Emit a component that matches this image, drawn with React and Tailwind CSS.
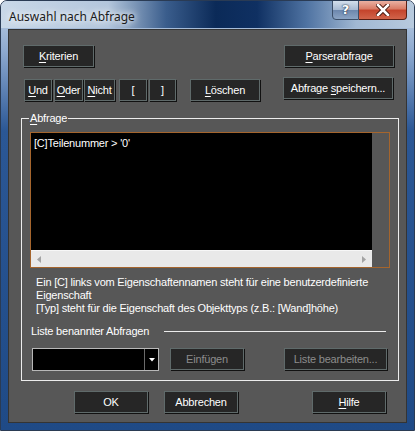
import React from 'react'

const Btn = ({ children, className = '', disabled = false }) => (
  <div
    className={`h-[22px] flex items-center justify-center bg-[#262626] border border-[#5f6a6a] shadow-[1px_1px_0_#111] ${disabled ? 'text-[#8c8c8c]' : 'text-white'} ${className}`}
  >
    <span className="whitespace-pre">{children}</span>
  </div>
)

const U = ({ children }) => <span className="underline underline-offset-2">{children}</span>

const App = () => {
  return (
    <div className="w-[415px] h-[431px] flex flex-col px-[7px] pb-[7px] rounded-t-[7px] border border-[#2a3b54] bg-[linear-gradient(to_bottom,#c2d2e4_0px,#8eaad0_50px,#2b5795_130px,#1f4a86_100%)] font-['Liberation_Sans',Arial,sans-serif] text-[11px] tracking-[-0.2px] overflow-hidden">
      {/* Titelleiste */}
      <div className="h-[27px] -mx-[7px] px-[7px] flex items-start bg-[linear-gradient(to_right,#c9d8e8_0%,#b3c6dc_26%,#3a5d8c_40%,#0b2a58_52%,#0f3062_62%,#4f73a2_74%,#a1b8d3_86%,#b8cade_100%)]">
        <span className="mt-[7px] ml-px text-[12px] tracking-normal text-[#1b1b1b] font-['Noto_Sans',sans-serif] [text-shadow:0_0_6px_#fff,0_0_10px_#fff]">
          Auswahl nach Abfrage
        </span>
        <div className="ml-auto flex -mt-px">
          <div className="w-[27px] h-[20px] flex items-center justify-center rounded-bl-[4px] border border-[#3b4e68] bg-[linear-gradient(to_bottom,#d3dfec_0%,#a6b9d2_50%,#6c87ad_51%,#8ba4c4_100%)]">
            <span className="text-[13px] font-bold text-white font-['DejaVu_Sans',sans-serif] [text-shadow:0_0_2px_#1d2d44,0_0_1px_#1d2d44]">?</span>
          </div>
          <div className="w-[48px] h-[20px] flex items-center justify-center rounded-br-[4px] border border-l-0 border-[#5a1f14] bg-[linear-gradient(to_bottom,#eab1a2_0%,#d97a64_45%,#c4432b_50%,#d1644a_100%)]">
            <svg width="14" height="12" viewBox="0 0 14 12">
              <path d="M2 1 L12 11 M12 1 L2 11" stroke="#4a1a10" strokeWidth="4.5" strokeLinecap="square" />
              <path d="M2 1 L12 11 M12 1 L2 11" stroke="#fff" strokeWidth="2.5" strokeLinecap="square" />
            </svg>
          </div>
        </div>
      </div>

      {/* Client-Bereich */}
      <div className="flex-1 mt-px border border-[#343434] bg-[#575757] flex flex-col">
        {/* Zeile 1 */}
        <div className="flex mt-[15px] ml-[14px]">
          <Btn className="w-[71px]"><U>K</U>riterien</Btn>
          <Btn className="w-[110px] ml-[190px]"><U>P</U>arserabfrage</Btn>
        </div>

        {/* Zeile 2 */}
        <div className="flex items-start mt-[10px] ml-[15px]">
          <div className="flex mt-[2px]">
            <Btn className="w-[28px]"><U>U</U>nd</Btn>
            <Btn className="w-[29px] ml-[2px]"><U>O</U>der</Btn>
            <Btn className="w-[31px] ml-px"><U>N</U>icht</Btn>
            <Btn className="w-[28px] ml-[4px]">[</Btn>
            <Btn className="w-[27px] ml-[2px]">]</Btn>
            <Btn className="w-[70px] ml-[14px]"><U>L</U>öschen</Btn>
          </div>
          <Btn className="w-[110px] ml-[23px]">Abfrage <U>s</U>peichern...</Btn>
        </div>

        {/* Gruppe Abfrage */}
        <div className="relative mt-[17px] ml-[12px] w-[378px] h-[263px] border border-[#ececec] flex flex-col">
          <span className="absolute -top-[7px] left-[7px] px-px bg-[#575757] text-white leading-[13px]">
            <U>A</U>bfrage
          </span>

          <div className="mt-[13px] ml-[8px] w-[360px] h-[136px] border border-[#a5652d] flex">
            <div className="w-[341px] flex flex-col">
              <div className="flex-1 bg-black text-white pl-[3px] pt-[4px] leading-[13px]">
                [C]Teilenummer &gt; '0'
              </div>
              <div className="h-[17px] bg-[#e9e9e9] border-t border-[#f7f7f7] flex items-center justify-between px-[6px]">
                <svg width="4" height="7" viewBox="0 0 4 7"><path d="M4 0 L0 3.5 L4 7 Z" fill="#a3a3a3" /></svg>
                <svg width="4" height="7" viewBox="0 0 4 7"><path d="M0 0 L4 3.5 L0 7 Z" fill="#a3a3a3" /></svg>
              </div>
            </div>
            <div className="flex-1 bg-[#575757]" />
          </div>

          <div className="mt-[8px] ml-[14px] text-white leading-[13px] whitespace-nowrap">
            <div>Ein [C] links vom Eigenschaftennamen steht für eine benutzerdefinierte</div>
            <div>Eigenschaft</div>
            <div>[Typ] steht für die Eigenschaft des Objekttyps (z.B.: [Wand]höhe)</div>
          </div>

          <div className="flex items-center mt-[10px] ml-[9px] leading-[13px]">
            <span className="text-white">Liste benannter Abfragen</span>
            <div className="ml-auto mr-[12px] w-[222px] h-[1px] bg-[#ececec]" />
          </div>

          <div className="flex items-start mt-[10px] ml-[10px]">
            <div className="w-[127px] h-[23px] border border-[#b8b8b8] bg-black flex">
              <div className="flex-1" />
              <div className="w-[14px] border-l border-[#6a6a6a] flex items-center justify-center">
                <svg width="6" height="4" viewBox="0 0 6 4"><path d="M0 0 L6 0 L3 3.5 Z" fill="#fff" /></svg>
              </div>
            </div>
            <Btn disabled className="w-[74px] ml-[11px]">Einfügen</Btn>
            <Btn disabled className="w-[103px] ml-[40px]">Liste bearbeiten...</Btn>
          </div>
        </div>

        {/* Untere Schaltflächen */}
        <div className="flex mt-[10px] ml-[65px]">
          <Btn className="w-[74px]">OK</Btn>
          <Btn className="w-[74px] ml-[16px]">Abbrechen</Btn>
          <Btn className="w-[74px] ml-[74px]"><U>H</U>ilfe</Btn>
        </div>
      </div>
    </div>
  )
}

export default App
